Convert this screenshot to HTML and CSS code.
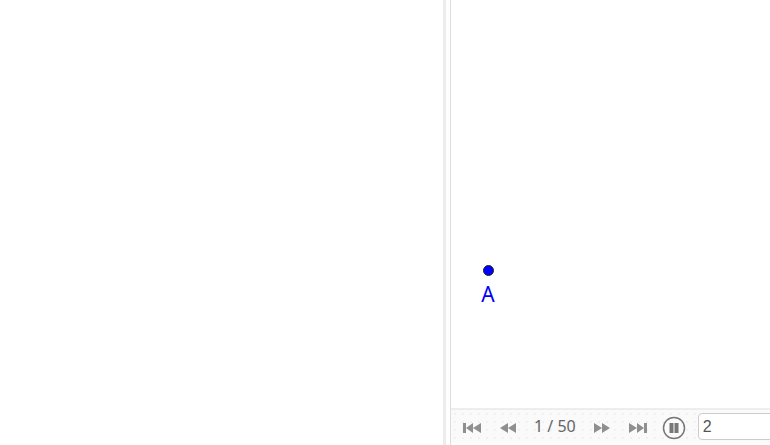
FILE: index.html
```html
<!DOCTYPE html>
<html lang="en">
<head>
    <meta charset="UTF-8">
    <meta name="viewport" content="width=device-width, initial-scale=1.0">
    <title>Applet</title>
    <link rel="stylesheet" href="styles.css">
</head>
<body>
    <div class="applet">
        <div class="algebra"></div>
        <div class="divider"></div>
        <div class="graphics">
            <div class="canvas">
                <div class="point">
                    <span class="dot"></span>
                    <span class="point-label">A</span>
                </div>
            </div>
            <div class="player">
                <button class="nav first" type="button">
                    <svg width="18" height="12" viewBox="0 0 18 12"><path d="M0 1h3v10H0zM10 1v10L3 6zM18 1v10l-8-5z"/></svg>
                </button>
                <button class="nav prev" type="button">
                    <svg width="18" height="12" viewBox="0 0 18 12"><path d="M9 1v10L1 6zM17 1v10L9 6z"/></svg>
                </button>
                <span class="counter">1 / 50</span>
                <button class="nav next" type="button">
                    <svg width="18" height="12" viewBox="0 0 18 12"><path d="M1 1v10l8-5zM9 1v10l8-5z"/></svg>
                </button>
                <button class="nav last" type="button">
                    <svg width="18" height="12" viewBox="0 0 18 12"><path d="M0 1v10l8-5zM8 1v10l7-5zM15 1h3v10h-3z"/></svg>
                </button>
                <button class="nav pause" type="button">
                    <svg width="24" height="24" viewBox="0 0 24 24"><circle cx="12" cy="12" r="10.500" fill="#fafafa" stroke="#777" stroke-width="1.500"/><path fill="#777" d="M7.500 7h4v10h-4zM12.500 7h4v10h-4z"/></svg>
                </button>
                <input class="speed" type="text" value="2">
            </div>
        </div>
    </div>
</body>
</html>
```

FILE: styles.css
```css
html, body {
    margin: 0;
    height: 100%;
    overflow: hidden;
    background-color: #fff;
}

.applet {
    display: flex;
    height: 445px;
    font-family: "Noto Sans", sans-serif;
}

.algebra {
    width: 443px;
    background-color: #fff;
}

.divider {
    width: 8px;
    box-sizing: border-box;
    background-color: #fff;
    border-left: 3px solid #ececec;
    border-right: 1px solid #ddd;
}

.graphics {
    flex: 1;
    min-width: 0;
    display: flex;
    flex-direction: column;
}

.canvas {
    flex: 1;
    padding: 265px 0 0 31px;
    box-sizing: border-box;
}

.point {
    display: flex;
    flex-direction: column;
    align-items: center;
    width: 12px;
}

.dot {
    width: 9px;
    height: 9px;
    border: 1px solid #222;
    border-radius: 50%;
    background-color: #0000ff;
    box-sizing: content-box;
}

.point-label {
    margin-top: 6px;
    font-size: 21px;
    line-height: 24px;
    color: #0000ff;
}

.player {
    height: 35px;
    margin-bottom: 2px;
    border-top: 2px solid #eee;
    background-color: #fafafa;
    background-image: radial-gradient(#e6e6e6 0.6px, transparent 0.8px);
    background-size: 8px 8px;
    display: flex;
    align-items: center;
    padding: 3px 0 0 12px;
    box-sizing: border-box;
}

.nav {
    padding: 0;
    border: none;
    background: none;
    display: flex;
    flex-shrink: 0;
    fill: #8f8f8f;
}

.prev {
    margin-left: 18px;
}

.counter {
    margin: -4px 17px 0 17px;
    font-size: 16px;
    line-height: 22px;
    color: #666;
    white-space: nowrap;
    flex-shrink: 0;
}

.last {
    margin-left: 18px;
}

.pause {
    margin-left: 15px;
}

.speed {
    width: 100px;
    height: 27px;
    margin: -3px 0 0 12px;
    padding: 0 4px;
    border: 1px solid #ccc;
    border-radius: 4px;
    box-sizing: border-box;
    font-family: "Liberation Sans", sans-serif;
    font-size: 16px;
    color: #555;
    flex-shrink: 0;
}
```
